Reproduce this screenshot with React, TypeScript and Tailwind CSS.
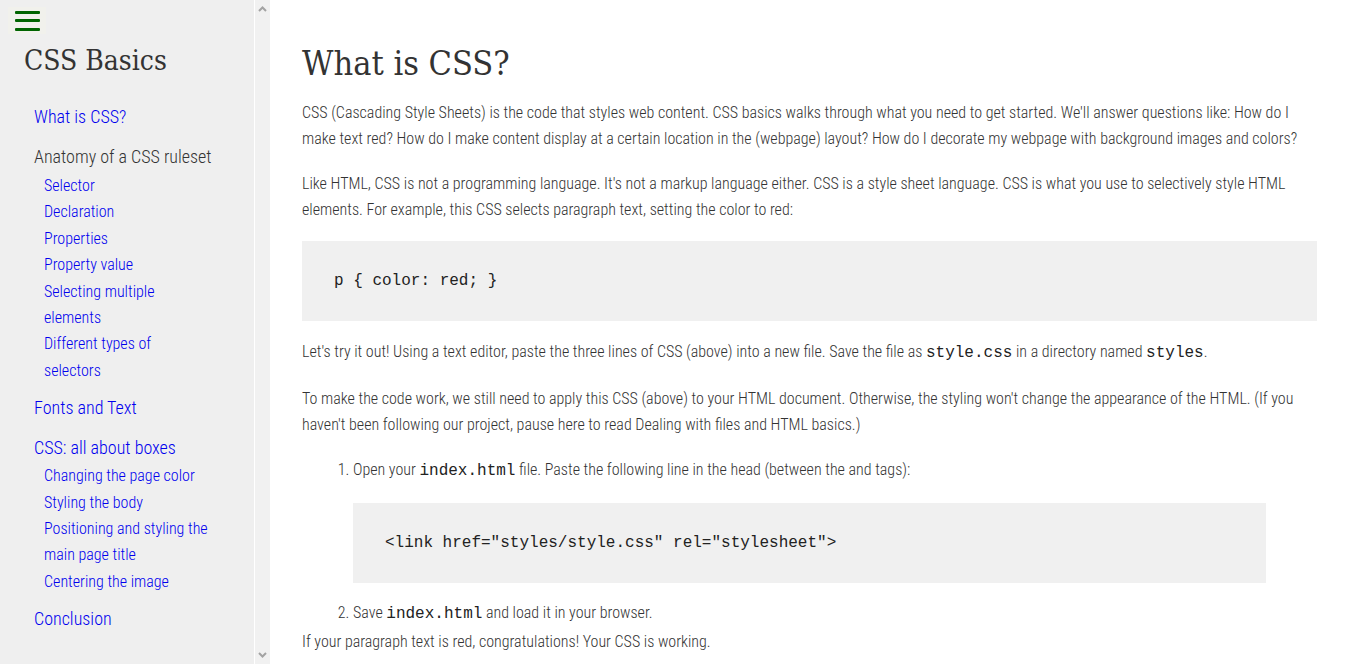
import React from "react";

const body = "font-['Roboto','Liberation_Sans',sans-serif] [font-stretch:condensed] font-light";
const mono = "font-['Liberation_Mono','Courier_New',monospace] font-normal";
const slab = "font-['DejaVu_Serif','Liberation_Serif',serif] [font-stretch:condensed] font-normal";

function Code({ children }: { children: React.ReactNode }) {
  return <code className={`${mono} text-[16px] text-[#222]`}>{children}</code>;
}

function SubLink({ children }: { children: React.ReactNode }) {
  return (
    <li className="leading-[26.4px] text-[16px] text-[#0000ee]">{children}</li>
  );
}

export default function App() {
  return (
    <div className={`flex h-[664px] w-[1349px] overflow-hidden bg-white ${body}`}>
      {/* Sidebar */}
      <aside className="flex w-[270px] shrink-0 bg-[#efefef]">
        <div className="w-[253px] shrink-0">
          <div className="ml-[8px] mt-[7px] flex h-[27px] w-[38px] flex-col items-start justify-center gap-[5.5px] bg-[#f1f1ec] pl-[7px]">
            <span className="block h-[3px] w-[25px] rounded-[1px] bg-[#006400]" />
            <span className="block h-[3px] w-[25px] rounded-[1px] bg-[#006400]" />
            <span className="block h-[3px] w-[25px] rounded-[1px] bg-[#006400]" />
          </div>
          <h2 className={`${slab} ml-[24px] mt-[7px] text-[28px] leading-[40px] text-[#333]`}>
            CSS Basics
          </h2>
          <ul className="ml-[34px] mt-[22px] w-[190px] text-[18px]">
            <li className="mb-[13px] leading-[27px] text-[#0000ee]">What is CSS?</li>
            <li className="mb-[10px]">
              <div className="leading-[27px] text-[#333]">Anatomy of a CSS ruleset</div>
              <ul className="ml-[10px] mt-[3px] w-[166px]">
                <SubLink>Selector</SubLink>
                <SubLink>Declaration</SubLink>
                <SubLink>Properties</SubLink>
                <SubLink>Property value</SubLink>
                <SubLink>Selecting multiple elements</SubLink>
                <SubLink>Different types of selectors</SubLink>
              </ul>
            </li>
            <li className="mb-[13px] leading-[27px] text-[#0000ee]">Fonts and Text</li>
            <li className="mb-[10px]">
              <div className="leading-[27px] text-[#0000ee]">CSS: all about boxes</div>
              <ul className="ml-[10px] mt-[2px] w-[166px]">
                <SubLink>Changing the page color</SubLink>
                <SubLink>Styling the body</SubLink>
                <SubLink>Positioning and styling the main page title</SubLink>
                <SubLink>Centering the image</SubLink>
              </ul>
            </li>
            <li className="leading-[27px] text-[#0000ee]">Conclusion</li>
          </ul>
        </div>
        {/* scrollbar */}
        <div className="ml-[1px] flex w-[16px] flex-col justify-between border-l border-white bg-[#f1f1f1] py-[4px]">
          <svg width="15" height="9" viewBox="0 0 15 9" className="block">
            <path d="M4 7 L7.5 3.5 L11 7" fill="none" stroke="#a3a3a3" strokeWidth="2" />
          </svg>
          <svg width="15" height="9" viewBox="0 0 15 9" className="block">
            <path d="M4 2 L7.5 5.5 L11 2" fill="none" stroke="#a3a3a3" strokeWidth="2" />
          </svg>
        </div>
      </aside>

      {/* Main */}
      <main className="min-w-0 flex-1 px-[32px] text-[16px] leading-[26px] text-[#333]">
        <h1 className={`${slab} mt-[41px] text-[34px] leading-[44px] text-[#333]`}>What is CSS?</h1>
        <p className="mt-[15px]">
          CSS (Cascading Style Sheets) is the code that styles web content. CSS basics walks through what you need to get started. We'll answer questions like: How do I make text red? How do I make content display at a certain location in the (webpage) layout? How do I decorate my webpage with background images and colors?
        </p>
        <p className="mt-[19px]">
          Like HTML, CSS is not a programming language. It's not a markup language either. CSS is a style sheet language. CSS is what you use to selectively style HTML elements. For example, this CSS selects paragraph text, setting the color to red:
        </p>
        <pre className={`${mono} mt-[18px] bg-[#f0f0f0] px-[32px] py-[30px] text-[16px] leading-[20px] text-[#222]`}>
          p {"{"} color: red; {"}"}
        </pre>
        <p className="mt-[18px]">
          Let's try it out! Using a text editor, paste the three lines of CSS (above) into a new file. Save the file as <Code>style.css</Code> in a directory named <Code>styles</Code>.
        </p>
        <p className="mt-[20px]">
          To make the code work, we still need to apply this CSS (above) to your HTML document. Otherwise, the styling won't change the appearance of the HTML. (If you haven't been following our project, pause here to read Dealing with files and HTML basics.)
        </p>
        <ol className="mt-[19px] list-decimal pl-[51px] pr-[51px]">
          <li>
            Open your <Code>index.html</Code> file. Paste the following line in the head (between the and tags):
            <pre className={`${mono} mb-[17px] mt-[19px] bg-[#f0f0f0] px-[32px] py-[30px] text-[16px] leading-[20px] text-[#222]`}>
              {'<link href="styles/style.css" rel="stylesheet">'}
            </pre>
          </li>
          <li>
            Save <Code>index.html</Code> and load it in your browser.
          </li>
        </ol>
        <p className="mt-[2px]">If your paragraph text is red, congratulations! Your CSS is working.</p>
      </main>
    </div>
  );
}
